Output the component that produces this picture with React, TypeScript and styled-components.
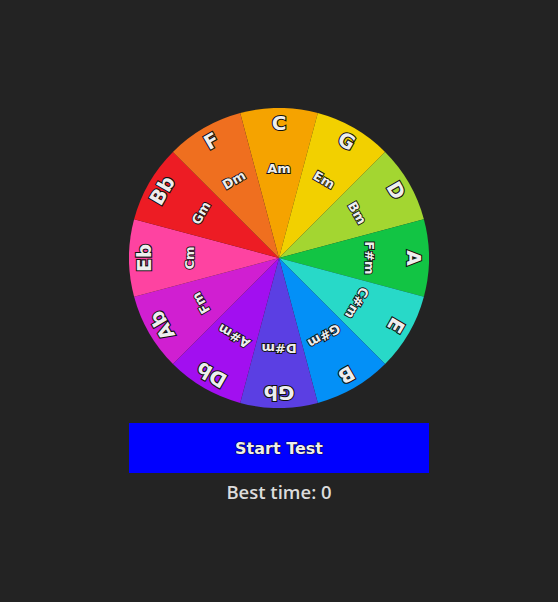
import React from "react";
import styled, { createGlobalStyle } from "styled-components";

const GlobalStyle = createGlobalStyle`
  body {
    margin: 0;
    background: #232323;
    font-family: "DejaVu Sans", Verdana, sans-serif;
  }
`;

type Key = { major: string; minor: string; color: string };

const KEYS: Key[] = [
  { major: "C", minor: "Am", color: "#f5a300" },
  { major: "G", minor: "Em", color: "#f2d000" },
  { major: "D", minor: "Bm", color: "#a3d631" },
  { major: "A", minor: "F#m", color: "#12c444" },
  { major: "E", minor: "C#m", color: "#28d9c8" },
  { major: "B", minor: "G#m", color: "#0390f7" },
  { major: "Gb", minor: "D#m", color: "#5b3fe3" },
  { major: "Db", minor: "A#m", color: "#a20ff0" },
  { major: "Ab", minor: "Fm", color: "#d01fd1" },
  { major: "Eb", minor: "Cm", color: "#fe43a1" },
  { major: "Bb", minor: "Gm", color: "#ed1c24" },
  { major: "F", minor: "Dm", color: "#ef6f1f" },
];

const R = 150;

const Page = styled.div`
  min-height: 100vh;
  display: flex;
  flex-direction: column;
  align-items: center;
  padding-top: 108px;
  box-sizing: border-box;
`;

const Wheel = styled.svg`
  width: 300px;
  height: 300px;
  display: block;
`;

const Label = styled.text<{ $size: number }>`
  font-family: "DejaVu Sans", Verdana, sans-serif;
  font-weight: 700;
  font-size: ${(p) => p.$size}px;
  fill: #eeeeee;
  stroke: #111;
  stroke-width: ${(p) => (p.$size > 14 ? 2.2 : 1.8)}px;
  paint-order: stroke;
  text-anchor: middle;
  dominant-baseline: central;
`;

const StartButton = styled.button`
  width: 300px;
  height: 50px;
  margin-top: 15px;
  border: none;
  background: #0000ff;
  color: #eeeeee;
  font-family: "DejaVu Sans", Verdana, sans-serif;
  font-weight: 700;
  font-size: 16px;
  text-shadow: 0 0 1px #000, 0 0 1px #000, 0 0 1px #000;
  cursor: pointer;
`;

const BestTime = styled.div`
  margin-top: 6px;
  font-family: "Open Sans", "Noto Sans", sans-serif;
  font-weight: 600;
  font-size: 18.5px;
  color: #dcdcdc;
`;

function point(angleDeg: number, r: number) {
  const a = ((angleDeg - 90) * Math.PI) / 180;
  return [R + r * Math.cos(a), R + r * Math.sin(a)];
}

function slice(i: number) {
  const [x1, y1] = point(i * 30 - 15, R);
  const [x2, y2] = point(i * 30 + 15, R);
  return `M${R},${R} L${x1},${y1} A${R},${R} 0 0 1 ${x2},${y2} Z`;
}

const App: React.FC = () => (
  <>
    <GlobalStyle />
    <Page>
      <Wheel viewBox="0 0 300 300">
        {KEYS.map((k, i) => (
          <path key={k.major} d={slice(i)} fill={k.color} />
        ))}
        {KEYS.map((k, i) => (
          <g key={k.major + "-t"} transform={`rotate(${i * 30} ${R} ${R})`}>
            <Label $size={20} x={R} y={R - 135}>
              {k.major}
            </Label>
            <Label $size={13} x={R} y={R - 90}>
              {k.minor}
            </Label>
          </g>
        ))}
      </Wheel>
      <StartButton>Start Test</StartButton>
      <BestTime>Best time: 0</BestTime>
    </Page>
  </>
);

export default App;
